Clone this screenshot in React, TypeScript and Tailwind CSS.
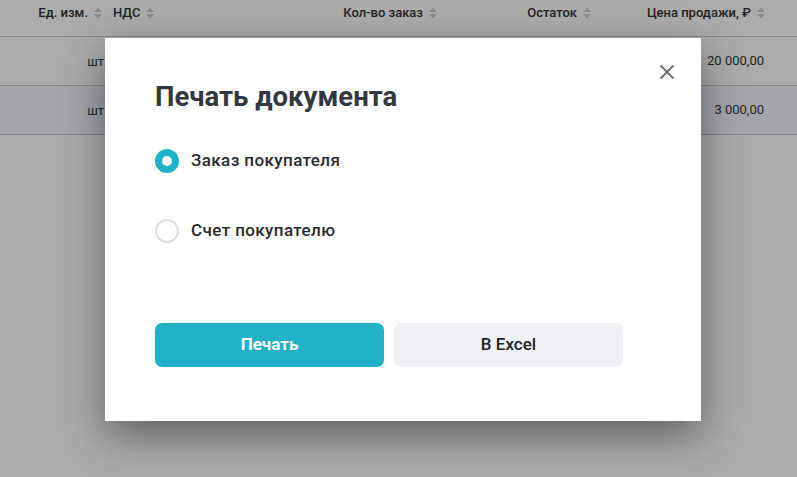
import React from "react";

function Sort() {
  return (
    <svg width="10" height="14" viewBox="0 0 10 14" className="ml-[5px] shrink-0">
      <path d="M5 1.5 L9 6 L1 6 Z" fill="#cfcfcf" />
      <path d="M5 12.5 L9 8 L1 8 Z" fill="#cfcfcf" />
    </svg>
  );
}

function HeadCell({ w, label, align = "end", pl = 0 }: { w: string; label: string; align?: string; pl?: number }) {
  return (
    <div
      className={`${w} flex items-center ${align === "end" ? "justify-end" : "justify-start"} text-[13px] font-medium text-[#333]`}
      style={{ paddingLeft: pl }}
    >
      <span>{label}</span>
      <Sort />
    </div>
  );
}

function Row({ price, bg }: { price: string; bg: string }) {
  return (
    <div className={`flex h-[49px] items-center border-b border-[#c9c9c9] ${bg} text-[13px] text-[#333]`}>
      <div className="w-[104px] text-right pt-[2px]">шт</div>
      <div className="w-[660px] text-right">{price}</div>
    </div>
  );
}

export default function App() {
  return (
    <div className="relative w-[797px] h-[477px] overflow-hidden bg-white" style={{ fontFamily: "Roboto, 'Noto Sans', sans-serif" }}>
      <div>
        <div className="flex h-[37px] items-start pt-[3px] border-b border-[#c9c9c9]">
          <HeadCell w="w-[106px] pr-[3px]" label="Ед. изм." />
          <HeadCell w="w-[60px]" label="НДС" align="start" pl={7} />
          <HeadCell w="w-[272px]" label="Кол-во заказ" />
          <HeadCell w="w-[154px]" label="Остаток" />
          <HeadCell w="w-[174px]" label="Цена продажи, ₽" />
        </div>
        <Row price="20 000,00" bg="bg-white" />
        <Row price="3 000,00" bg="bg-[#f4f7ff]" />
      </div>

      <div className="absolute inset-0 bg-black/[0.325]" />

      <div className="absolute left-[105px] top-[38px] w-[596px] h-[383px] bg-white shadow-[0_14px_40px_rgba(0,0,0,0.45)] px-[50px] pt-[43px]">
        <button className="absolute left-[554px] top-[26px] w-[16px] h-[16px] flex items-center justify-center">
          <svg width="16" height="16" viewBox="0 0 16 16">
            <path d="M1.5 1.5 L14.5 14.5 M14.5 1.5 L1.5 14.5" stroke="#707070" strokeWidth="2" />
          </svg>
        </button>
        <h2 className="text-[27.5px] leading-[32px] font-bold text-[#333840]">Печать документа</h2>
        <div className="mt-[36px] flex flex-col gap-[46px]">
          <label className="flex items-center gap-[12px] h-[24px]">
            <span className="w-[24px] h-[24px] rounded-full border-[7px] border-[#20b2c6] bg-white" />
            <span className="text-[17px] font-medium text-[#2a2a2a] tracking-[0.4px]">Заказ покупателя</span>
          </label>
          <label className="flex items-center gap-[12px] h-[24px]">
            <span className="w-[24px] h-[24px] rounded-full border-[2px] border-[#dcdde2] bg-white" />
            <span className="text-[17px] font-medium text-[#2a2a2a] tracking-[0.4px]">Счет покупателю</span>
          </label>
        </div>
        <div className="mt-[80px] flex gap-[10px]">
          <button className="w-[229px] h-[44px] rounded-[7px] bg-[#20b2c6] text-white text-[17px] font-bold">Печать</button>
          <button className="w-[229px] h-[44px] rounded-[7px] bg-[#f1f2f5] text-[#222] text-[17px] font-medium">В Excel</button>
        </div>
      </div>
    </div>
  );
}
